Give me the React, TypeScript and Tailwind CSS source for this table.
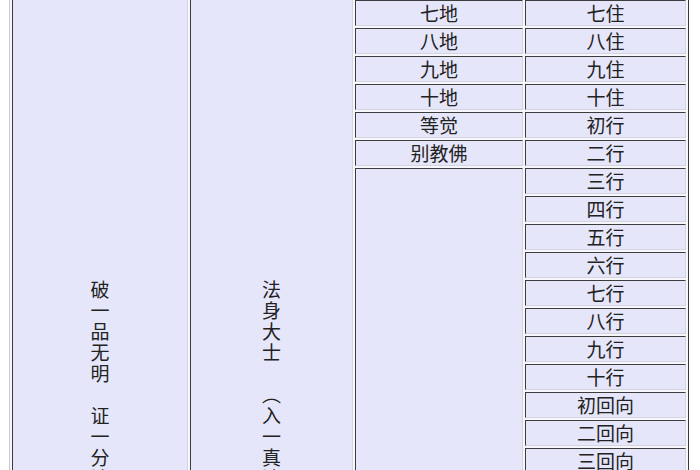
const font = { fontFamily: '"Noto Sans CJK SC", "Noto Sans", sans-serif' };

const diRows = ['七地', '八地', '九地', '十地', '等觉', '别教佛'];
const zhuRows = [
  '七住', '八住', '九住', '十住', '初行', '二行', '三行', '四行', '五行',
  '六行', '七行', '八行', '九行', '十行', '初回向', '二回向', '三回向',
];

const col1 = ['破', '一', '品', '无', '明', '　', '证', '一', '分', '法', '身'];
const col2 = ['法', '身', '大', '士', '　', '︵', '入', '一', '真', '法', '界'];

function Cell({ label }: { label: string }) {
  return (
    <div className="h-[26px] shrink-0 border-t border-l border-t-[#3c3c3c] border-l-[#3c3c3c] border-b border-r border-b-[#d4d4dc] border-r-[#d4d4dc] bg-[#e6e6fa] text-center text-[19px] leading-[24px] text-[#222]">
      {label}
    </div>
  );
}

function VerticalCell({ chars, width }: { chars: string[]; width: string }) {
  return (
    <div
      className={`${width} shrink-0 border-l border-l-[#3c3c3c] border-r border-r-[#d4d4dc] bg-[#e6e6fa] pt-[278px] flex flex-col items-center text-[19px] text-[#222]`}
    >
      {chars.map((c, i) => (
        <span key={i} className="h-[21px] leading-[21px]">
          {c}
        </span>
      ))}
    </div>
  );
}

export default function App() {
  return (
    <div className="w-[700px] h-[470px] overflow-hidden bg-white" style={font}>
      <div className="ml-[9px] w-[680px] h-[480px] border-l border-l-[#c8c8c8] border-r border-r-[#3a3a3a] bg-[#f6f6fc] px-[2px] flex gap-[2px]">
        <VerticalCell chars={col1} width="w-[176px]" />
        <VerticalCell chars={col2} width="w-[163px]" />

        <div className="w-[168px] shrink-0 flex flex-col gap-[2px]">
          {diRows.map((r) => (
            <Cell key={r} label={r} />
          ))}
          <div className="flex-1 border-t border-l border-t-[#3c3c3c] border-l-[#3c3c3c] border-r border-r-[#d4d4dc] bg-[#e6e6fa]" />
        </div>

        <div className="w-[161px] shrink-0 flex flex-col gap-[2px]">
          {zhuRows.map((r) => (
            <Cell key={r} label={r} />
          ))}
        </div>
      </div>
    </div>
  );
}
